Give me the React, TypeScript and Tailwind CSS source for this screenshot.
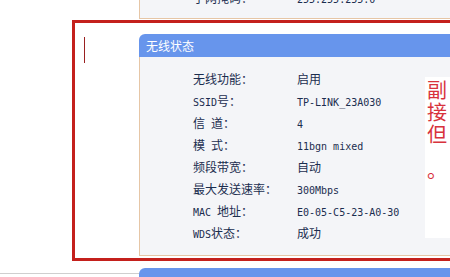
const cjk = "font-['Noto_Sans_CJK_SC',sans-serif]";

// latin runs render in a narrow mono face, like SimSun's half-width glyphs
function Mixed({ text }: { text: string }) {
  const runs = text.match(/[\x00-\x7f]+|[^\x00-\x7f]+/g) ?? [];
  return (
    <>
      {runs.map((r, i) =>
        /^[\x00-\x7f]/.test(r) ? (
          <span key={i} className="font-['DejaVu_Sans_Mono',monospace] text-[10px] whitespace-pre">
            {r}
          </span>
        ) : (
          <span key={i}>{r}</span>
        )
      )}
    </>
  );
}

function Row({ label, value }: { label: string; value: string }) {
  return (
    <div className="flex h-[22px] items-center">
      <div className="w-[104px] shrink-0">
        <Mixed text={label} />
      </div>
      <div>
        <Mixed text={value} />
      </div>
    </div>
  );
}

const rows = [
  ["无线功能：", "启用"],
  ["SSID号：", "TP-LINK_23A030"],
  ["信 道：", "4"],
  ["模 式：", "11bgn mixed"],
  ["频段带宽：", "自动"],
  ["最大发送速率：", "300Mbps"],
  ["MAC 地址：", "E0-05-C5-23-A0-30"],
  ["WDS状态：", "成功"],
];

export default function App() {
  return (
    <div className={`flex h-[277px] w-[450px] flex-col overflow-hidden bg-white text-[12px] text-[#1b2d4f] ${cjk}`}>
      {/* previous panel, cut off at the top */}
      <div className="ml-[139px] h-[19px] shrink-0 overflow-hidden border-b border-l border-[#e6c6a6] bg-[#f4f5f8]">
        <div className="-mt-[13px] pl-[53px]">
          <Row label="子网掩码：" value="255.255.255.0" />
        </div>
      </div>

      {/* red annotation frame */}
      <div className="ml-[72px] mt-[1px] flex h-[241px] shrink-0 border-[3px] border-r-0 border-[#c4201c]">
        <div className="w-[64px] shrink-0">
          <div className="ml-[9px] mt-[14px] h-[26px] w-px bg-[#9a2020]" />
        </div>

        <div className="mt-[11px] flex h-[222px] min-w-0 flex-1 flex-col">
          <div className="h-[23px] shrink-0 rounded-tl-[6px] bg-[#6795ec] pl-[7px] leading-[23px] text-white">
            无线状态
          </div>
          <div className="flex min-h-0 flex-1 border-b border-l border-[#e6c6a6] bg-[#f4f5f8]">
            <div className="min-w-0 flex-1 pl-[53px] pt-[11px]">
              {rows.map(([l, v]) => (
                <Row key={l} label={l} value={v} />
              ))}
            </div>
            <div className="mt-[20px] h-[161px] w-[25px] shrink-0 overflow-visible bg-white pl-[2px] pt-[2px] text-[20px] leading-[22px] text-[#d8323c]">
              <div>副</div>
              <div>接</div>
              <div>但</div>
              <div className="mt-[14px]">。</div>
            </div>
          </div>
        </div>
      </div>

      {/* next panel header */}
      <div className="mt-[7px] flex shrink-0">
        <div className="h-[6px] w-[139px] shrink-0 border-b border-[#cfcfcf]" />
        <div className="h-[24px] flex-1 rounded-tl-[6px] bg-[#6795ec] pl-[37px] pt-[4px] leading-[23px] text-white">
          WAN口状态
        </div>
      </div>
    </div>
  );
}
